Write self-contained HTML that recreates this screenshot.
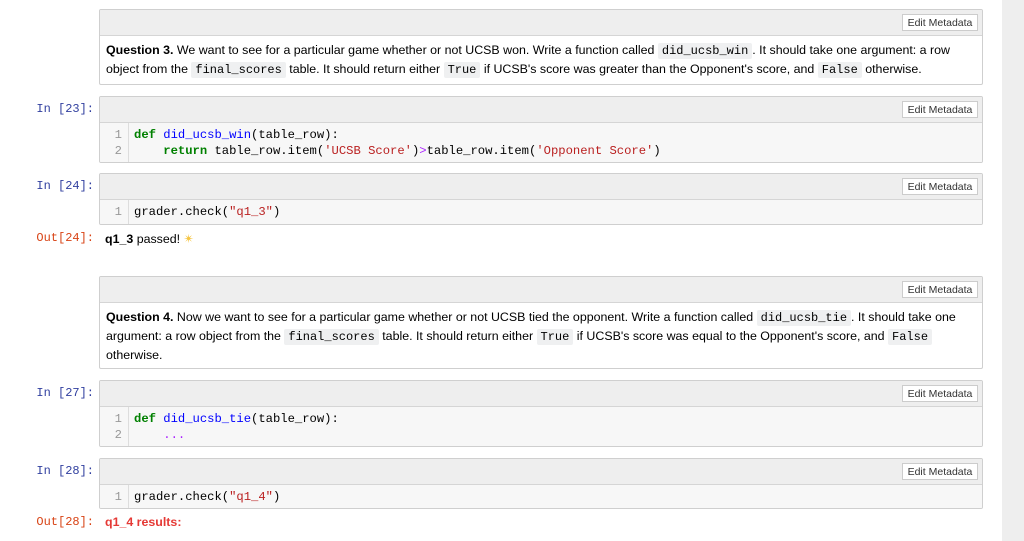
<!DOCTYPE html>
<html><head><style>
body{margin:0;width:1024px;height:541px;background:#fff;position:relative;overflow:hidden;font-family:"Liberation Sans",sans-serif;}
.side{position:absolute;left:1002px;top:0;width:22px;height:541px;background:#eee;}
.cell{position:absolute;left:99px;width:884px;border:1px solid #cfcfcf;border-radius:2px;background:#fff;box-sizing:border-box;overflow:hidden;}
.tb{height:25px;background:#eee;border-bottom:1px solid #d5d5d5;position:relative;}
.btn{position:absolute;right:4px;top:4px;height:17px;width:76px;background:#fff;border:1px solid #ccc;font-size:10.5px;color:#333;line-height:16px;text-align:center;box-sizing:border-box;}
.md{padding:5px 6px 0 6px;font-size:12.4px;line-height:18px;color:#000;}
.md code{font-family:"Liberation Mono",monospace;font-size:12px;background:#eff0f1;padding:1px 4px;border-radius:2px;}
.code{background:#f7f7f7;position:relative;font-family:"Liberation Mono",monospace;font-size:12.2px;line-height:16px;color:#000;}
.gut{position:absolute;left:0;top:0;bottom:0;width:29px;border-right:1px solid #ddd;color:#999;text-align:right;box-sizing:border-box;padding-right:6px;padding-top:4px;}
.src{padding:4px 0 0 34px;white-space:pre;}
.p{position:absolute;left:0;width:94px;text-align:right;font-family:"Liberation Mono",monospace;font-size:12px;}
.in{color:#303f9f;}.out{color:#d84315;}
.k{color:#008000;font-weight:bold}.f{color:#0000ff}.s{color:#ba2121}.o{color:#aa22ff}
.res{position:absolute;left:105px;font-size:12.4px;}
</style></head><body>
<div class="side"></div>

<div class="cell" style="top:9px;height:76px"><div class="tb"><div class="btn">Edit Metadata</div></div>
<div class="md"><b>Question 3.</b> We want to see for a particular game whether or not UCSB won. Write a function called <code>did_ucsb_win</code>. It should take one argument: a row object from the <code>final_scores</code> table. It should return either <code>True</code> if UCSB's score was greater than the Opponent's score, and <code>False</code> otherwise.</div></div>

<div class="p in" style="top:102px">In [23]:</div>
<div class="cell" style="top:96px;height:67px"><div class="tb"><div class="btn">Edit Metadata</div></div>
<div class="code" style="height:40px"><div class="gut">1<br>2</div><div class="src"><span class="k">def</span> <span class="f">did_ucsb_win</span>(table_row):
    <span class="k">return</span> table_row.item(<span class="s">'UCSB Score'</span>)<span class="o">&gt;</span>table_row.item(<span class="s">'Opponent Score'</span>)</div></div></div>

<div class="p in" style="top:179px">In [24]:</div>
<div class="cell" style="top:173px;height:52px"><div class="tb"><div class="btn">Edit Metadata</div></div>
<div class="code" style="height:25px"><div class="gut">1</div><div class="src">grader.check(<span class="s">"q1_3"</span>)</div></div></div>

<div class="p out" style="top:231px">Out[24]:</div>
<div class="res" style="top:231px"><b>q1_3</b> passed! <span style="color:#f5c542">✴</span></div>

<div class="cell" style="top:276px;height:93px"><div class="tb"><div class="btn">Edit Metadata</div></div>
<div class="md"><b>Question 4.</b> Now we want to see for a particular game whether or not UCSB tied the opponent. Write a function called <code>did_ucsb_tie</code>. It should take one argument: a row object from the <code>final_scores</code> table. It should return either <code>True</code> if UCSB's score was equal to the Opponent's score, and <code>False</code> otherwise.</div></div>

<div class="p in" style="top:386px">In [27]:</div>
<div class="cell" style="top:380px;height:67px"><div class="tb"><div class="btn">Edit Metadata</div></div>
<div class="code" style="height:40px"><div class="gut">1<br>2</div><div class="src"><span class="k">def</span> <span class="f">did_ucsb_tie</span>(table_row):
    <span class="o">...</span></div></div></div>

<div class="p in" style="top:464px">In [28]:</div>
<div class="cell" style="top:458px;height:51px"><div class="tb"><div class="btn">Edit Metadata</div></div>
<div class="code" style="height:24px"><div class="gut">1</div><div class="src">grader.check(<span class="s">"q1_4"</span>)</div></div></div>

<div class="p out" style="top:515px">Out[28]:</div>
<div class="res" style="top:515px;color:#e53935"><b>q1_4 results:</b></div>
</body></html>
